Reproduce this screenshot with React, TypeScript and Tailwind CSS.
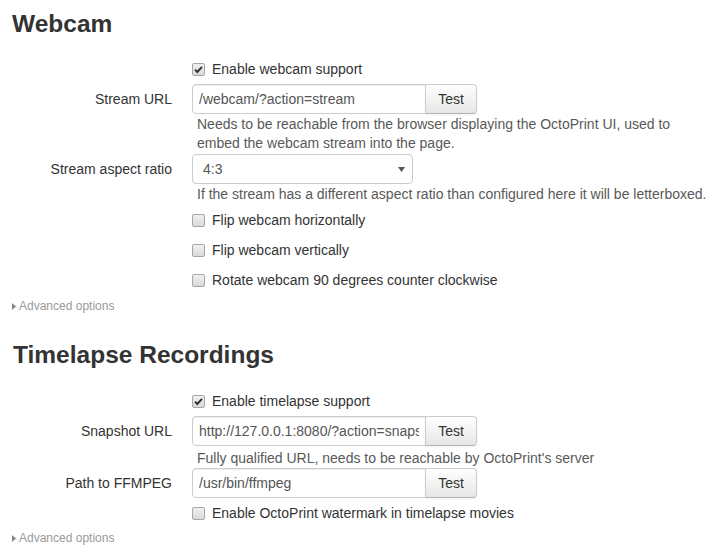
function Checkbox({ checked }: { checked?: boolean }) {
	return (
		<span className="flex h-[13px] w-[13px] shrink-0 items-center justify-center rounded-[2px] border border-[#a6a6a6] bg-gradient-to-b from-[#f0f0f0] to-[#dadada]">
			{checked && (
				<svg width="11" height="11" viewBox="0 0 11 11">
					<path d="M2 5.6 L4.3 8 L9 2.8" fill="none" stroke="#333" strokeWidth="2" />
				</svg>
			)}
		</span>
	);
}

function Row({ label, children, className = "" }: { label?: string; children: React.ReactNode; className?: string }) {
	return (
		<div className={`flex items-center gap-5 ${className}`}>
			<div className="w-[160px] shrink-0 text-right text-[#333]">{label}</div>
			<div className="flex items-center">{children}</div>
		</div>
	);
}

function CheckRow({ label, checked, className = "" }: { label: string; checked?: boolean; className?: string }) {
	return (
		<Row className={`h-[20px] ${className}`}>
			<div className="flex items-center gap-[7px]">
				<Checkbox checked={checked} />
				<span className="text-[#333]">{label}</span>
			</div>
		</Row>
	);
}

function UrlInput({ value }: { value: string }) {
	return (
		<div className="flex h-[30px]">
			<div className="flex w-[234px] items-center overflow-hidden rounded-l-[4px] border border-[#ccc] px-[6px] text-[#555] shadow-[inset_0_1px_1px_rgba(0,0,0,0.075)]">
				<div className="min-w-0 flex-1 overflow-hidden whitespace-nowrap">{value}</div>
			</div>
			<button className="ml-[-1px] w-[52px] rounded-r-[4px] border border-[#ccc] border-b-[#b3b3b3] bg-gradient-to-b from-white to-[#e6e6e6] text-[#333] shadow-[0_1px_2px_rgba(0,0,0,0.05)]">
				Test
			</button>
		</div>
	);
}

function Help({ children, className = "" }: { children: React.ReactNode; className?: string }) {
	return (
		<Row className={className}>
			<p className="pl-[5px] text-[#595959]">{children}</p>
		</Row>
	);
}

function Advanced({ className = "" }: { className?: string }) {
	return (
		<div className={`flex items-center gap-[3px] text-[12px] leading-[18px] text-[#999] ${className}`}>
			<svg width="4" height="7" viewBox="0 0 4 7">
				<path d="M0 0 L4 3.5 L0 7 Z" fill="#888" />
			</svg>
			<span>Advanced options</span>
		</div>
	);
}

function App() {
	return (
		<div className="min-h-screen bg-white pl-[12px] font-['Liberation_Sans',Arial,sans-serif] text-[14px] leading-[20px] text-[#333]">
			<h3 className="mt-[4px] text-[24.5px] font-bold leading-[40px]">Webcam</h3>
			<CheckRow className="mt-[15px]" label="Enable webcam support" checked />
			<Row className="mt-[5px]" label="Stream URL">
				<UrlInput value="/webcam/?action=stream" />
			</Row>
			<Help className="mt-[1px] leading-[19px]">
				Needs to be reachable from the browser displaying the OctoPrint UI, used to
				<br />
				embed the webcam stream into the page.
			</Help>
			<Row className="mt-[1px]" label="Stream aspect ratio">
				<div className="flex h-[30px] w-[221px] items-center justify-between rounded-[4px] border border-[#ccc] pl-[10px] pr-[7px] text-[#555]">
					<span>4:3</span>
					<svg width="7" height="5" viewBox="0 0 7 5">
						<path d="M0 0 L7 0 L3.5 5 Z" fill="#555" />
					</svg>
				</div>
			</Row>
			<Help>If the stream has a different aspect ratio than configured here it will be letterboxed.</Help>
			<CheckRow className="mt-[6px]" label="Flip webcam horizontally" />
			<CheckRow className="mt-[10px]" label="Flip webcam vertically" />
			<CheckRow className="mt-[10px]" label="Rotate webcam 90 degrees counter clockwise" />
			<Advanced className="mt-[7px]" />

			<h3 className="ml-[1px] mt-[20px] text-[24.5px] font-bold leading-[40px]">Timelapse Recordings</h3>
			<CheckRow className="mt-[16px]" label="Enable timelapse support" checked />
			<Row className="mt-[5px]" label="Snapshot URL">
				<UrlInput value="http://127.0.0.1:8080/?action=snapshot" />
			</Row>
			<Help className="mt-[2px]">Fully qualified URL, needs to be reachable by OctoPrint's server</Help>
			<Row label="Path to FFMPEG">
				<UrlInput value="/usr/bin/ffmpeg" />
			</Row>
			<CheckRow className="mt-[5px]" label="Enable OctoPrint watermark in timelapse movies" />
			<Advanced className="mt-[6px]" />
		</div>
	);
}

export default App;
